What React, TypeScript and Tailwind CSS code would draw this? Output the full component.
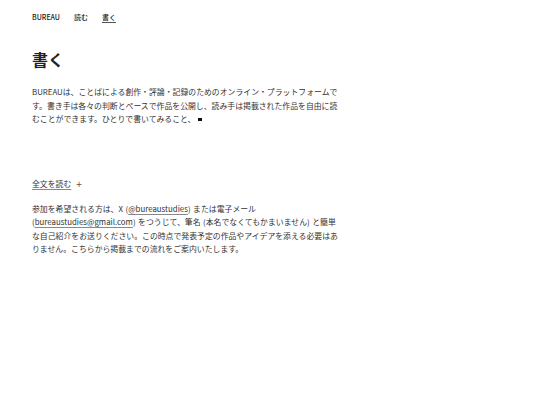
import React from 'react';

const Open = () => <span className="pl-[2.5px]">(</span>;
const Close = () => <span className="pr-[2.5px]">)</span>;

export default function App() {
  return (
    <div
      className="min-h-[405px] w-[540px] bg-white text-[#333]"
      style={{ fontFamily: '"Noto Sans CJK JP", "Noto Sans", sans-serif' }}
    >
      <div className="px-[32px] pt-[11px]">
        {/* Nav */}
        <nav className="flex items-center gap-[14px] text-[7px] leading-[12px] font-medium text-[#222]">
          <span>BUREAU</span>
          <span>読む</span>
          <span className="underline decoration-[#555] underline-offset-2">書く</span>
        </nav>

        {/* Heading */}
        <h1 className="mt-[26px] text-[16px] leading-[20px] font-semibold text-[#222]">書く</h1>

        {/* Intro */}
        <p className="mt-[16px] w-[310px] text-[7.875px] leading-[13.5px]">
          BUREAUは、ことばによる創作・評論・記録のためのオンライン・プラットフォームです。書き手は各々の判断とペースで作品を公開し、読み手は掲載された作品を自由に読むことができます。ひとりで書いてみること、
          <span className="ml-[3px] inline-block h-[3px] w-[4px] bg-[#111] align-middle" />
        </p>

        <div className="mt-[51px] flex items-center gap-[5px] text-[7.875px] leading-[13px]">
          <span className="underline decoration-[#888] underline-offset-2">全文を読む</span>
          <span className="text-[10px] text-[#555]">+</span>
        </div>

        <p className="mt-[12px] w-[310px] text-[7.875px] leading-[13.5px]">
          参加を希望される方は、X<Open /><span className="underline decoration-[#888] underline-offset-2">@bureaustudies</span><Close />または電子メール<span className="whitespace-nowrap"><span>(</span><span className="underline decoration-[#888] underline-offset-2">bureaustudies@gmail.com</span><Close /></span>をつうじて、筆名<Open />本名でなくてもかまいません<Close />と簡単な自己紹介をお送りください。この時点で発表予定の作品やアイデアを添える必要はありません。こちらから掲載までの流れをご案内いたします。
        </p>
      </div>
    </div>
  );
}
